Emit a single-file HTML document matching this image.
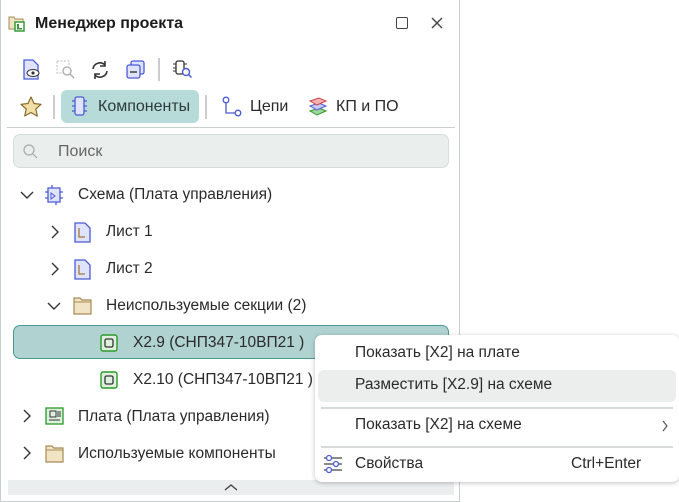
<!DOCTYPE html>
<html><head><meta charset="utf-8"><style>
*{box-sizing:border-box;margin:0;padding:0}
body{width:679px;height:502px;background:#fff;font-family:"Liberation Sans",sans-serif;font-size:15.5px;color:#222;position:relative;overflow:hidden}
.panel{position:absolute;left:0;top:0;width:460px;height:502px;border:1px solid #c9cfcf;border-top:none;background:#fff}
.abs{position:absolute}
.t{position:absolute;white-space:nowrap;color:#2a2a2a;line-height:18px}
.menu{position:absolute;left:315px;top:335px;width:364px;height:147px;background:#fff;border-radius:7px;box-shadow:0 1px 5px rgba(0,0,0,.25)}
.sep{position:absolute;left:6px;right:6px;height:2px;background:#d6dada}
</style></head><body>
<div class="panel">
 <svg class="abs" style="left:7px;top:14px" width="18" height="18" viewBox="0 0 18 18"><path d="M1 3h5l1 2h8v10H1z" fill="#f1e4c4" stroke="#a78b55"/><rect x="7" y="8" width="9" height="9" fill="#fff" stroke="#3a9a3a" stroke-width="1.5"/><rect x="9" y="10" width="2" height="4" fill="#3a9a3a"/><rect x="9" y="14" width="5" height="1.5" fill="#3a9a3a"/></svg>
 <div class="t" style="left:34px;top:15px;font-size:16px;font-weight:bold;color:#1d1d1d">Менеджер проекта</div>
 <div class="abs" style="left:395px;top:17px;width:12px;height:12px;border:1.5px solid #444;border-radius:2px"></div>
 <svg class="abs" style="left:430px;top:17px" width="12" height="12"><path d="M1 1L11 11M11 1L1 11" stroke="#444" stroke-width="1.4"/></svg>
 <svg class="abs" style="left:21px;top:59px" width="20" height="22"><path d="M2 1h9l5 5v14H2z" fill="#dfe3fb" stroke="#4a5bd6" stroke-width="1.3"/><ellipse cx="11" cy="14" rx="6" ry="3.5" fill="#fff" stroke="#333"/><circle cx="11" cy="14" r="1.6" fill="#333"/></svg>
 <svg class="abs" style="left:55px;top:60px" width="20" height="20"><rect x="1" y="1" width="12" height="12" fill="none" stroke="#bbb" stroke-dasharray="2 1.5"/><circle cx="11" cy="11" r="4" fill="#fff" stroke="#aaa" stroke-width="1.3"/><path d="M14 14l4 4" stroke="#aaa" stroke-width="1.3"/></svg>
 <svg class="abs" style="left:89px;top:60px" width="20" height="20"><path d="M3 9a7 7 0 0 1 12-4M17 11a7 7 0 0 1-12 4" fill="none" stroke="#333" stroke-width="1.6"/><path d="M15 1v5h-5M5 19v-5h5" fill="none" stroke="#333" stroke-width="1.6"/></svg>
 <svg class="abs" style="left:125px;top:60px" width="20" height="20"><rect x="5" y="1" width="13" height="13" rx="2" fill="#dfe3fb" stroke="#4a5bd6" stroke-width="1.3"/><rect x="1" y="5" width="13" height="13" rx="2" fill="#dfe3fb" stroke="#4a5bd6" stroke-width="1.3"/><path d="M4 12h7" stroke="#333" stroke-width="1.4"/></svg>
 <div class="abs" style="left:157px;top:58px;width:2px;height:23px;background:#ccc"></div>
 <svg class="abs" style="left:172px;top:60px" width="20" height="20"><rect x="3" y="1" width="8" height="13" rx="2" fill="#fff" stroke="#333" stroke-width="1.3"/><path d="M0 4h3M0 8h3M0 11h3M11 4h3" stroke="#333"/><circle cx="13" cy="12" r="3.5" fill="#fff" stroke="#4a5bd6" stroke-width="1.4"/><path d="M15.5 14.5l3 3" stroke="#4a5bd6" stroke-width="1.5"/></svg>
 <svg class="abs" style="left:19px;top:96px" width="22" height="21"><path d="M11 1l3 6.5 7 .8-5.2 4.8 1.5 7L11 16.5 4.7 20l1.5-7L1 8.3l7-.8z" fill="#f2dfa8" stroke="#8a6a2a" stroke-width="1.2" stroke-linejoin="round"/></svg>
 <div class="abs" style="left:52px;top:95px;width:2px;height:24px;background:#ccc"></div>
 <div class="abs" style="left:60px;top:90px;width:138px;height:33px;background:#b6dbd9;border-radius:6px"></div>
 <svg class="abs" style="left:70px;top:96px" width="18" height="20"><rect x="4" y="1" width="9" height="18" rx="2" fill="#dfe3fb" stroke="#4a5bd6" stroke-width="1.3"/><path d="M1 5h3M1 10h3M1 15h3M13 5h3M13 10h3M13 15h3" stroke="#4a5bd6" stroke-width="1.3"/></svg>
 <div class="t" style="left:97px;top:98px;font-size:16px;color:#2f3a3a">Компоненты</div>
 <div class="abs" style="left:204px;top:95px;width:2px;height:24px;background:#ccc"></div>
 <svg class="abs" style="left:221px;top:96px" width="20" height="21"><circle cx="4" cy="4" r="2.8" fill="#fff" stroke="#4a5bd6" stroke-width="1.3"/><circle cx="16" cy="17" r="2.8" fill="#fff" stroke="#4a5bd6" stroke-width="1.3"/><path d="M4 7v10h9" fill="none" stroke="#4a5bd6" stroke-width="1.3"/></svg>
 <div class="t" style="left:249px;top:98px;font-size:16px">Цепи</div>
 <svg class="abs" style="left:307px;top:96px" width="20" height="22"><path d="M2 15l9-3 7 3-9 4z" fill="#9ed59e" stroke="#2a9a2a"/><path d="M2 10l9-3 7 3-9 4z" fill="#c4ccf6" stroke="#4a5bd6"/><path d="M2 5l9-3 7 3-9 4z" fill="#f3b4b4" stroke="#d04040"/></svg>
 <div class="t" style="left:335px;top:98px;font-size:16px">КП и ПО</div>
 <div class="abs" style="left:6px;top:127px;width:448px;height:1px;background:#c9cfcf"></div>
 <div class="abs" style="left:12px;top:134px;width:436px;height:34px;background:#eaeeed;border:1px solid #d6dcdb;border-radius:7px"></div>
 <svg class="abs" style="left:22px;top:144px" width="15" height="15"><circle cx="6" cy="6" r="5" fill="none" stroke="#aaa" stroke-width="1.2"/><path d="M10 10l4 4" stroke="#aaa" stroke-width="1.2"/></svg>
 <div class="t" style="left:57px;top:143px;font-size:16px;color:#666">Поиск</div>
 <svg class="abs" style="left:19px;top:190px" width="14" height="10"><path d="M1 2l6 6 6-6" fill="none" stroke="#333" stroke-width="1.4"/></svg>
 <svg class="abs" style="left:43px;top:184px" width="20" height="22"><path d="M4 4h12v14H4z" fill="#dfe3fb" stroke="#4a5bd6" stroke-width="1.3"/><path d="M1 8h3M1 14h3M16 8h3M16 14h3M8 1v3M12 18v3" stroke="#4a5bd6" stroke-width="1.3"/><path d="M7 9l4 3-4 3z" fill="none" stroke="#4a5bd6"/></svg>
 <div class="t" style="left:77px;top:186px">Схема (Плата управления)</div>
 <svg class="abs" style="left:49px;top:225px" width="10" height="14"><path d="M2 1l6 6-6 6" fill="none" stroke="#333" stroke-width="1.4"/></svg>
 <svg class="abs" style="left:73px;top:222px" width="17" height="21"><path d="M1 1h10l5 5v14H1z" fill="#dfe3fb" stroke="#4a5bd6" stroke-width="1.3"/><path d="M5 6v9h6" fill="none" stroke="#a57a30" stroke-width="1.3"/></svg>
 <div class="t" style="left:105px;top:223px">Лист 1</div>
 <svg class="abs" style="left:49px;top:262px" width="10" height="14"><path d="M2 1l6 6-6 6" fill="none" stroke="#333" stroke-width="1.4"/></svg>
 <svg class="abs" style="left:73px;top:259px" width="17" height="21"><path d="M1 1h10l5 5v14H1z" fill="#dfe3fb" stroke="#4a5bd6" stroke-width="1.3"/><path d="M5 6v9h6" fill="none" stroke="#a57a30" stroke-width="1.3"/></svg>
 <div class="t" style="left:105px;top:260px">Лист 2</div>
 <svg class="abs" style="left:46px;top:301px" width="14" height="10"><path d="M1 2l6 6 6-6" fill="none" stroke="#333" stroke-width="1.4"/></svg>
 <svg class="abs" style="left:72px;top:297px" width="19" height="18"><path d="M1 1h6l2 2h9v14H1z" fill="#f1e4c4" stroke="#a78b55" stroke-width="1.2"/><path d="M1 5h17" stroke="#a78b55"/></svg>
 <div class="t" style="left:105px;top:297px">Неиспользуемые секции (2)</div>
 <div class="abs" style="left:12px;top:325px;width:436px;height:34px;background:#b0d3d1;border:1px solid #4a9a96;border-radius:7px"></div>
 <svg class="abs" style="left:99px;top:334px" width="18" height="18"><rect x="1" y="1" width="16" height="16" rx="2" fill="#dff0df" stroke="#2a9a2a" stroke-width="1.4"/><rect x="5" y="5" width="8" height="8" rx="1.5" fill="none" stroke="#333" stroke-width="1.3"/></svg>
 <div class="t" style="left:132px;top:334px">X2.9 (СНП347-10ВП21 )</div>
 <svg class="abs" style="left:99px;top:371px" width="18" height="18"><rect x="1" y="1" width="16" height="16" rx="2" fill="#dff0df" stroke="#2a9a2a" stroke-width="1.4"/><rect x="5" y="5" width="8" height="8" rx="1.5" fill="none" stroke="#333" stroke-width="1.3"/></svg>
 <div class="t" style="left:132px;top:371px">X2.10 (СНП347-10ВП21 )</div>
 <svg class="abs" style="left:21px;top:409px" width="10" height="14"><path d="M2 1l6 6-6 6" fill="none" stroke="#333" stroke-width="1.4"/></svg>
 <svg class="abs" style="left:44px;top:407px" width="19" height="19"><rect x="1" y="1" width="17" height="16" fill="#dff0df" stroke="#2a9a2a" stroke-width="1.3"/><rect x="5" y="4" width="6" height="6" fill="none" stroke="#333"/><path d="M13 4v6M15 4v6M4 13h11" stroke="#333"/></svg>
 <div class="t" style="left:77px;top:408px">Плата (Плата управления)</div>
 <svg class="abs" style="left:21px;top:446px" width="10" height="14"><path d="M2 1l6 6-6 6" fill="none" stroke="#333" stroke-width="1.4"/></svg>
 <svg class="abs" style="left:44px;top:445px" width="19" height="18"><path d="M1 1h6l2 2h9v14H1z" fill="#f1e4c4" stroke="#a78b55" stroke-width="1.2"/><path d="M1 5h17" stroke="#a78b55"/></svg>
 <div class="t" style="left:77px;top:445px">Используемые компоненты</div>
 <div class="abs" style="left:7px;top:480px;width:446px;height:15px;background:#ebeeee"></div>
 <svg class="abs" style="left:223px;top:483px" width="14" height="9"><path d="M1 7l6-5 6 5" fill="none" stroke="#444" stroke-width="1.4"/></svg>
</div>
<div class="menu">
 <div class="t" style="left:40px;top:9px">Показать [X2] на плате</div>
 <div class="abs" style="left:3px;top:35px;width:358px;height:32px;background:#ebeeed;border-radius:6px"></div>
 <div class="t" style="left:40px;top:41px">Разместить [X2.9] на схеме</div>
 <div class="sep" style="top:72px"></div>
 <div class="t" style="left:40px;top:81px">Показать [X2] на схеме</div>
 <svg class="abs" style="left:346px;top:85px" width="8" height="12"><path d="M2 1l4 5-4 5" fill="none" stroke="#555" stroke-width="1.2"/></svg>
 <div class="sep" style="top:111px"></div>
 <svg class="abs" style="left:8px;top:119px" width="20" height="20"><path d="M1 4h18M1 10h18M1 16h18" stroke="#444" stroke-width="1.2"/><circle cx="6" cy="4" r="2.5" fill="#fff" stroke="#4a5bd6" stroke-width="1.3"/><circle cx="13" cy="10" r="2.5" fill="#fff" stroke="#4a5bd6" stroke-width="1.3"/><circle cx="6" cy="16" r="2.5" fill="#fff" stroke="#4a5bd6" stroke-width="1.3"/></svg>
 <div class="t" style="left:40px;top:120px">Свойства</div>
 <div class="t" style="left:256px;top:120px">Ctrl+Enter</div>
</div>
</body></html>
